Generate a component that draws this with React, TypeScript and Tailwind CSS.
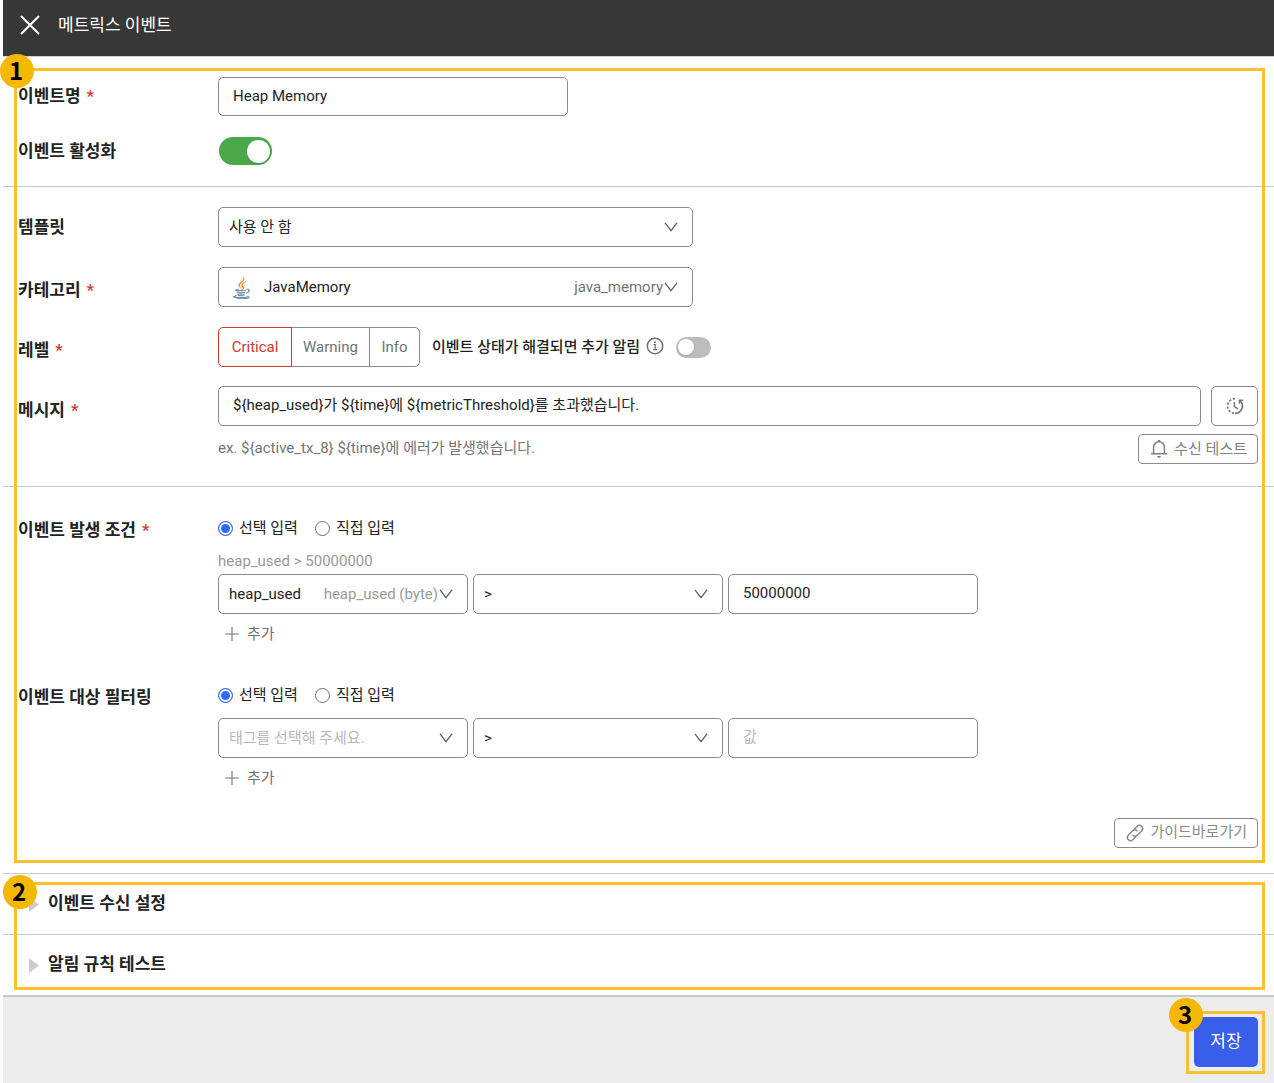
import { useState } from "react";
import type { ReactNode } from "react";

function CloseIcon() {
  return (
    <svg className="h-5 w-5" viewBox="0 0 20 20" fill="none" stroke="currentColor" strokeWidth="2" strokeLinecap="round" aria-hidden="true">
      <path d="M1.5 1.5l17 17M18.5 1.5l-17 17" />
    </svg>
  );
}

function Chevron() {
  return (
    <svg className="h-[10px] w-[14px] shrink-0" viewBox="0 0 14 10" fill="none" stroke="#5f5f5f" strokeWidth="1.3" aria-hidden="true">
      <path d="M1 0.8L7 8.6L13 0.8" />
    </svg>
  );
}

function JavaIcon() {
  return (
    <svg className="h-[22px] w-[17px]" viewBox="0 0 384 512" strokeWidth="8" aria-hidden="true">
      <g fill="#e8862e" stroke="#e8862e">
        <path d="M192.34 280.8c-19-42.7-83.1-80.2 0-145.8C296 53.2 242.84 0 242.84 0c21.5 84.5-75.6 110.1-110.7 162.6-23.9 35.9 11.7 74.4 60.2 118.2z" />
        <path d="M306.94 104.6c.1 0-175.2 43.8-91.5 140.2 24.7 28.4-6.5 54-6.5 54s62.7-32.4 33.9-72.9c-26.9-37.8-47.5-56.6 64.1-121.3z" />
      </g>
      <g fill="#41719c" stroke="#41719c">
        <path d="M277.74 312.9c9.8-6.7 23.4-12.5 23.4-12.5s-38.7 7-77.2 10.2c-47.1 3.9-97.7 4.7-123.1 1.3-60.1-8 33-30.1 33-30.1s-36.1-2.4-80.6 19c-52.5 25.4 130 37 224.5 12.1z" />
        <path d="M300.84 375.1a12.19 12.19 0 0 1-2 2.6c128.3-33.7 81.1-118.9 19.8-97.3a17.33 17.33 0 0 0-8.2 6.3 70.45 70.45 0 0 1 11-3c31-6.5 75.5 41.5-20.6 91.4z" />
        <path d="M348 437.4s14.5 11.9-15.9 21.2c-57.9 17.5-240.8 22.8-291.6.7-18.3-7.9 16-19 26.8-21.3 11.2-2.4 17.7-2 17.7-2-20.3-14.3-131.3 28.1-56.4 40.2C232.84 509.4 401 461.3 348 437.4z" />
        <path d="M124.44 396c-78.7 22 47.9 67.4 148.1 24.5a185.89 185.89 0 0 1-28.2-13.8c-44.7 8.5-65.4 9.1-106 4.5-33.5-3.8-13.9-15.2-13.9-15.2z" />
        <path d="M304.24 493.2c-78.7 14.8-175.8 13.1-233.3 3.6 0-.1 11.8 9.7 72.4 13.6 92.2 5.9 233.8-3.3 237.1-46.9 0 0-6.4 16.5-76.2 29.7z" />
        <path d="M260.64 353c-59.2 11.4-93.5 11.1-136.8 6.6-33.5-3.5-11.6-19.7-11.6-19.7-86.8 28.8 48.2 61.4 169.5 25.9a60.37 60.37 0 0 1-21.1-12.8z" />
      </g>
    </svg>
  );
}

function InfoIcon() {
  return (
    <svg className="h-[18px] w-[18px]" viewBox="0 0 18 18" fill="none" stroke="#6f6f6f" strokeWidth="1.5" aria-hidden="true">
      <circle cx="9" cy="9" r="7.7" />
      <path d="M7.4 7.6H9.2V12.6M7.2 12.7H11.2" strokeWidth="1.2" />
      <circle cx="9" cy="5.2" r="1" fill="#6f6f6f" stroke="none" />
    </svg>
  );
}

function RecentIcon() {
  return (
    <svg className="h-[18px] w-[18px]" viewBox="0 0 18 18" fill="none" stroke="#777" strokeWidth="1.7" aria-hidden="true">
      <path d="M9 1.6A7.4 7.4 0 0 0 9 16.4" strokeDasharray="2.2 1.8" />
      <path d="M9 16.4A7.4 7.4 0 0 0 14.2 3.8" />
      <path d="M17.2 3.2H13.4V6.8" strokeWidth="1.5" />
      <path d="M8.4 5V9.6L12 11.8" strokeWidth="1.5" />
    </svg>
  );
}

function BellIcon() {
  return (
    <svg className="h-5 w-[18px]" viewBox="0 0 18 20" fill="none" stroke="currentColor" strokeWidth="1.5" aria-hidden="true">
      <path d="M3.6 14.6V8.2a5.4 5.4 0 0 1 10.8 0v6.4M1 14.7H17" />
      <path d="M9 1V3" strokeWidth="2.4" />
      <path d="M6.8 17H11.2L9 19.2Z" fill="currentColor" stroke="none" />
    </svg>
  );
}

function LinkIcon() {
  return (
    <svg className="h-[18px] w-[18px]" viewBox="0 0 18 18" fill="none" stroke="currentColor" strokeWidth="1.5" strokeLinecap="round" aria-hidden="true">
      <g transform="rotate(-45 9 9)">
        <path d="M7 12.2H2.8a3.2 3.2 0 0 1 0-6.4H9a3 3 0 0 1 3 3" />
        <path d="M11 5.8H15.2a3.2 3.2 0 0 1 0 6.4H9a3 3 0 0 1-3-3" />
      </g>
    </svg>
  );
}

function PlusIcon() {
  return (
    <svg className="h-[14px] w-[14px]" viewBox="0 0 14 14" fill="none" stroke="#777" strokeWidth="1.2" aria-hidden="true">
      <path d="M7 0V14M0 7H14" />
    </svg>
  );
}

function Badge({ n, className }: { n: number; className: string }) {
  return (
    <span
      className={`pointer-events-none absolute z-20 flex h-[34px] w-[34px] items-center justify-center rounded-full bg-[#f5b700] pr-[2px] pb-[2px] font-['Noto_Sans_CJK_KR',sans-serif] text-2xl leading-none font-bold text-black ${className}`}
    >
      {n}
    </span>
  );
}

function Outline({ className }: { className: string }) {
  return <div aria-hidden="true" className={`pointer-events-none absolute z-10 border-3 border-[#fbc02d] ${className}`} />;
}

function Row({ label, required, htmlFor, labelClass = "h-10", children }: { label: string; required?: boolean; htmlFor?: string; labelClass?: string; children: ReactNode }) {
  return (
    <div className="flex items-start">
      <label htmlFor={htmlFor} className={`flex w-[200px] shrink-0 items-center text-[17px] font-bold ${labelClass}`}>
        {label}
        {required && <span className="ml-[6px] font-medium text-[#d0392f]">*</span>}
      </label>
      <div className="min-w-0 flex-1">{children}</div>
    </div>
  );
}

function Select({ id, label, value, muted, note, noteClass = "text-[#737373]", icon, width }: { id: string; label?: string; value: string; muted?: boolean; note?: string; noteClass?: string; icon?: ReactNode; width: string }) {
  return (
    <div className={`relative h-10 ${width}`}>
      <select
        id={id}
        aria-label={label}
        className={`h-full w-full appearance-none rounded-[5px] border border-[#8c8c8c] bg-white pr-8 ${icon ? "pl-[45px]" : "pl-[10px]"} ${muted ? "text-[#b9b9b9]" : ""}`}
      >
        <option>{value}</option>
      </select>
      {icon && <span className="pointer-events-none absolute inset-y-0 left-[15px] flex items-center pt-[2px]">{icon}</span>}
      <span className="pointer-events-none absolute inset-y-0 right-[15px] flex items-center gap-px">
        {note && <span className={noteClass}>{note}</span>}
        <Chevron />
      </span>
    </div>
  );
}

function ModeRadios({ name }: { name: string }) {
  return (
    <div className="flex h-6 items-center gap-[17px]">
      {["선택 입력", "직접 입력"].map((text, i) => (
        <label key={text} className="flex items-center gap-[6px]">
          <input
            type="radio"
            name={name}
            defaultChecked={i === 0}
            className="h-[15px] w-[15px] appearance-none rounded-full border border-[#6f6f6f] bg-white checked:border-[#2f6bff] checked:bg-[#2f6bff] checked:shadow-[inset_0_0_0_2px_#fff]"
          />
          {text}
        </label>
      ))}
    </div>
  );
}

function AddButton() {
  return (
    <button type="button" className="mt-2 ml-[7px] flex h-6 items-center gap-2 text-[#6f6f6f]">
      <PlusIcon />
      추가
    </button>
  );
}

const field = "rounded-[5px] border border-[#8c8c8c] bg-white px-[14px] pb-[2px] outline-none placeholder:text-[#b9b9b9]";

const levels = [
  { name: "Critical", width: "w-[74px]" },
  { name: "Warning", width: "w-[79px]" },
  { name: "Info", width: "w-[51px]" },
];

export default function App() {
  const [level, setLevel] = useState("Critical");

  return (
    <div className="min-h-screen bg-white pl-[3px] font-[Roboto,'Noto_Sans_CJK_KR',sans-serif] text-[15px] leading-5 text-[#222]">
      <header className="flex h-[57px] items-center gap-[18px] border-b border-[#cfcfcf] bg-[#373737] px-[17px] pb-[6px] text-white">
        <button type="button" aria-label="닫기">
          <CloseIcon />
        </button>
        <h1 className="text-[17px]">메트릭스 이벤트</h1>
      </header>

      <form onSubmit={(e) => e.preventDefault()}>
        <div className="relative">
          <Badge n={1} className="-top-[3px] -left-[3px]" />
          <Outline className="top-[11px] right-[9px] bottom-[11px] left-[11px]" />

          <section className="flex flex-col gap-[21px] border-b border-[#c8c8c8] pt-5 pr-4 pb-[21px] pl-[15px]">
            <Row label="이벤트명" required htmlFor="name" labelClass="h-[38px]">
              <input id="name" type="text" defaultValue="Heap Memory" className={`block h-[39px] w-[350px] ${field}`} />
            </Row>
            <Row label="이벤트 활성화" htmlFor="enabled" labelClass="h-7">
              <input
                id="enabled"
                type="checkbox"
                role="switch"
                defaultChecked
                className="ml-px flex h-7 w-[53px] appearance-none items-center rounded-full bg-[#bdbdbd] px-[2px] before:h-[23px] before:w-[23px] before:rounded-full before:bg-white before:shadow checked:justify-end checked:bg-[#4aa84a]"
              />
            </Row>
          </section>

          <section className="flex flex-col gap-5 border-b border-[#c8c8c8] pt-5 pr-4 pb-[22px] pl-[15px]">
            <Row label="템플릿" htmlFor="template">
              <Select id="template" value="사용 안 함" width="w-[475px]" />
            </Row>
            <Row label="카테고리" required htmlFor="category" labelClass="h-[46px]">
              <Select id="category" value="JavaMemory" note="java_memory" icon={<JavaIcon />} width="w-[475px]" />
            </Row>
            <div className="-mt-[6px]">
              <Row label="레벨" required labelClass="h-[46px]">
                <div className="flex items-center">
                  <div role="group" aria-label="레벨" className="flex">
                    {levels.map(({ name, width }) => (
                      <button
                        key={name}
                        type="button"
                        aria-pressed={level === name}
                        onClick={() => setLevel(name)}
                        className={`-ml-px h-10 border first:ml-0 first:rounded-l-[5px] last:rounded-r-[5px] ${width} ${level === name ? "relative border-[#d0392f] text-[#d0392f]" : "border-[#8c8c8c] text-[#737373]"}`}
                      >
                        {name}
                      </button>
                    ))}
                  </div>
                  <label htmlFor="resolved" className="ml-3 font-medium">
                    이벤트 상태가 해결되면 추가 알림
                  </label>
                  <button type="button" aria-label="도움말" className="ml-[6px] pb-[2px]">
                    <InfoIcon />
                  </button>
                  <input
                    id="resolved"
                    type="checkbox"
                    role="switch"
                    className="ml-3 flex h-[21px] w-[35px] appearance-none items-center rounded-full bg-[#bdbdbd] px-[2px] before:h-4 before:w-4 before:rounded-full before:bg-white before:shadow checked:justify-end checked:bg-[#4aa84a]"
                  />
                </div>
              </Row>
            </div>
            <div className="-mt-[7px]">
              <Row label="메시지" required htmlFor="message" labelClass="h-12">
                <div className="flex gap-[10px]">
                  <input id="message" type="text" defaultValue="${heap_used}가 ${time}에 ${metricThreshold}를 초과했습니다." className="h-10 min-w-0 flex-1 rounded-[5px] border border-[#8c8c8c] bg-white px-[14px] pb-[5px] outline-none" />
                  <button type="button" aria-label="최근 메시지" className="flex h-10 w-[47px] items-center justify-center rounded-[5px] border border-[#8c8c8c]">
                    <RecentIcon />
                  </button>
                </div>
                <div className="mt-2 flex items-center justify-between">
                  <p className="pb-[2px] text-[#757575]">{"ex. ${active_tx_8} ${time}에 에러가 발생했습니다."}</p>
                  <button type="button" className="flex h-[30px] items-center gap-[6px] rounded-[4px] border border-[#8c8c8c] pr-[10px] pl-[11px] text-[#808080]">
                    <BellIcon />
                    수신 테스트
                  </button>
                </div>
              </Row>
            </div>
          </section>

          <section className="border-b border-[#c8c8c8] pt-[29px] pr-4 pb-[25px] pl-[15px]">
            <Row label="이벤트 발생 조건" required labelClass="h-7">
              <ModeRadios name="condition-mode" />
              <p className="mt-[11px] text-[#999]">heap_used &gt; 50000000</p>
              <div className="mt-[3px] flex gap-[5px]">
                <Select id="metric" label="메트릭" value="heap_used" note="heap_used (byte)" noteClass="text-[#999]" width="w-[250px]" />
                <Select id="metric-op" label="연산자" value=">" width="w-[250px]" />
                <input type="text" aria-label="임계값" defaultValue="50000000" className={`h-10 w-[250px] ${field}`} />
              </div>
              <AddButton />
            </Row>
            <div className="mt-[37px]">
              <Row label="이벤트 대상 필터링" labelClass="h-7">
                <ModeRadios name="filter-mode" />
                <div className="mt-[11px] flex gap-[5px]">
                  <Select id="tag" label="태그" value="태그를 선택해 주세요." muted width="w-[250px]" />
                  <Select id="tag-op" label="연산자" value=">" width="w-[250px]" />
                  <input type="text" aria-label="값" placeholder="값" className={`h-10 w-[250px] ${field}`} />
                </div>
                <AddButton />
              </Row>
            </div>
            <div className="mt-7 flex justify-end">
              <a href="#guide" className="flex h-[30px] items-center gap-[6px] rounded-[4px] border border-[#8c8c8c] pr-[10px] pl-[11px] text-[#8c8c8c]">
                <LinkIcon />
                <span className="pb-[2px]">가이드바로가기</span>
              </a>
            </div>
          </section>
        </div>

        <div className="relative">
          <Badge n={2} className="top-px left-0" />
          <Outline className="top-2 right-[9px] bottom-[5px] left-[11px]" />
          {["이벤트 수신 설정", "알림 규칙 테스트"].map((title) => (
            <button
              key={title}
              type="button"
              aria-expanded={false}
              className="flex h-[61px] w-full items-center gap-[9px] border-b border-[#c8c8c8] pl-[26px] text-[17px] font-bold last:h-[60px] last:border-b-0"
            >
              <svg className="h-[15px] w-[10px]" viewBox="0 0 10 15" fill="#ccc" aria-hidden="true">
                <path d="M0 0L10 7.5L0 15Z" />
              </svg>
              <span className="pb-[2px]">{title}</span>
            </button>
          ))}
        </div>

        <footer className="flex justify-end border-t-2 border-[#c8c8c8] bg-[#ededed] pt-5 pr-4 pb-4">
          <div className="relative">
            <Outline className="-top-[6px] -right-[7px] -bottom-[7px] -left-2" />
            <Badge n={3} className="-top-[19px] -left-[25px]" />
            <button type="submit" className="h-[50px] w-16 rounded-[5px] bg-[#375fe9] pb-[2px] text-[17px] text-white">
              저장
            </button>
          </div>
        </footer>
      </form>
    </div>
  );
}
